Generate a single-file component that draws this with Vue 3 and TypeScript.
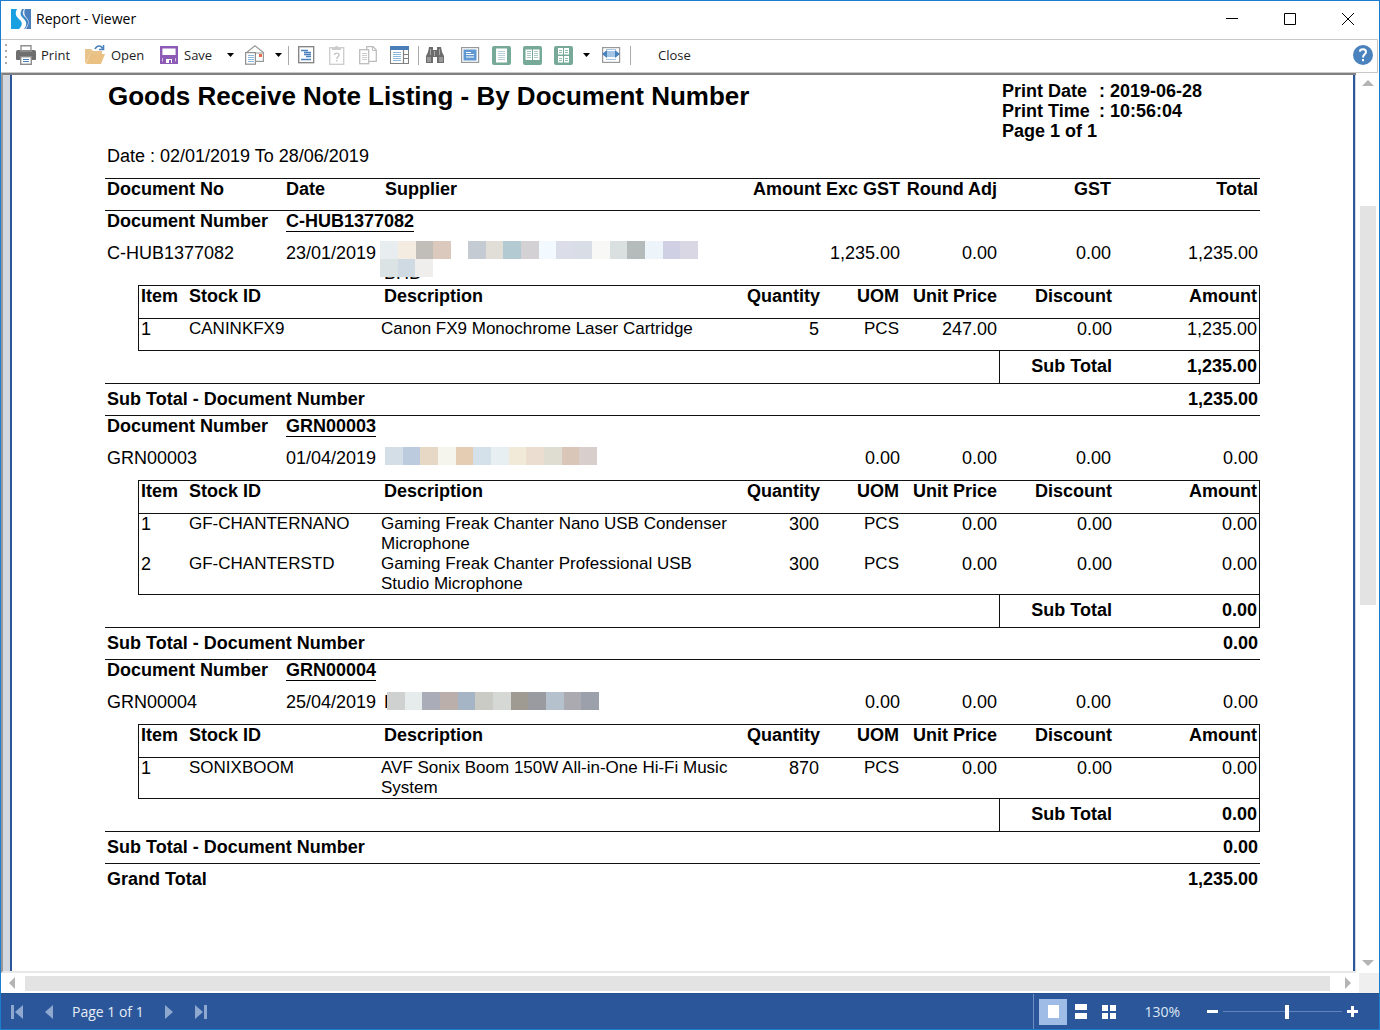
<script setup lang="ts">
import { ref } from 'vue'

interface Mosaic { x: number; y: number; w: number; colors: string[] }
interface Item { no: number; stock: string; desc: string; qty: string; uom: string; price: string; discount: string; amount: string }
interface Group {
  doc: string; date: string; supplier: string; mosaics: Mosaic[]
  amount: string; round: string; gst: string; total: string
  items: Item[]; subTotal: string
}

const groups: Group[] = [
  {
    doc: 'C-HUB1377082', date: '23/01/2019', supplier: '\nBHD',
    mosaics: [
      { x: 1, y: -2, w: 71, colors: ['#e8edf0', '#f4ece0', '#c1bdb8', '#dcc9be'] },
      { x: 89, y: -2, w: 230, colors: ['#c4cbd3', '#e1ded7', '#b4cad3', '#d3d1d4', '#f2f9ff', '#dbdde9', '#d9dde5', '#f8f8f6', '#dadfe0', '#b5baba', '#edf5fb', '#cfd0e3', '#d8d7e3'] },
      { x: 1, y: 16, w: 53, colors: ['#dbe3e5', '#cfdae2', '#efeeed'] },
    ],
    amount: '1,235.00', round: '0.00', gst: '0.00', total: '1,235.00',
    items: [
      { no: 1, stock: 'CANINKFX9', desc: 'Canon FX9 Monochrome Laser Cartridge', qty: '5', uom: 'PCS', price: '247.00', discount: '0.00', amount: '1,235.00' },
    ],
    subTotal: '1,235.00',
  },
  {
    doc: 'GRN00003', date: '01/04/2019', supplier: '',
    mosaics: [
      { x: 6, y: -1, w: 212, colors: ['#d4dee7', '#bccbdd', '#e7d8c6', '#f6f5ed', '#e5cdb4', '#d5e1ea', '#e7eff2', '#f2ead9', '#ebded1', '#dfdcd1', '#dac6b8', '#d8cfcc'] },
    ],
    amount: '0.00', round: '0.00', gst: '0.00', total: '0.00',
    items: [
      { no: 1, stock: 'GF-CHANTERNANO', desc: 'Gaming Freak Chanter Nano USB Condenser\nMicrophone', qty: '300', uom: 'PCS', price: '0.00', discount: '0.00', amount: '0.00' },
      { no: 2, stock: 'GF-CHANTERSTD', desc: 'Gaming Freak Chanter Professional USB\nStudio Microphone', qty: '300', uom: 'PCS', price: '0.00', discount: '0.00', amount: '0.00' },
    ],
    subTotal: '0.00',
  },
  {
    doc: 'GRN00004', date: '25/04/2019', supplier: 'K',
    mosaics: [
      { x: 8, y: 0, w: 212, colors: ['#cfd1d1', '#e6ecec', '#aaadb7', '#bbafab', '#a5b5c6', '#cacbc5', '#d6d8d5', '#9f9b93', '#9a9ba1', '#b5c1cc', '#aaaab0', '#9ca0ab'] },
    ],
    amount: '0.00', round: '0.00', gst: '0.00', total: '0.00',
    items: [
      { no: 1, stock: 'SONIXBOOM', desc: 'AVF Sonix Boom 150W All-in-One Hi-Fi Music\nSystem', qty: '870', uom: 'PCS', price: '0.00', discount: '0.00', amount: '0.00' },
    ],
    subTotal: '0.00',
  },
]

const zoom = ref(54)
</script>

<template>
  <div class="window">
    <header class="titlebar">
      <svg class="logo" width="20" height="20" viewBox="0 0 20 20">
        <rect width="20" height="20" fill="#18a0e0" />
        <path d="M11 0H20V20H12C18 14 15 11 12 8C9 5 10 3 11 0Z" fill="#4a80bd" />
        <path d="M6 0C3 6 6 8 9 11C12 14 11 17 8 20H13C17 15 15 12 12 9C9 6 9 4 11 0Z" fill="#fff" />
        <path d="M13 0C10 5 13 7 15 9C18 12 18 15 14 20H15C19 14 18 11 15 8C13 5 13 3 14 0Z" fill="#dcecf8" />
      </svg>
      <h1 class="caption">Report - Viewer</h1>
      <button class="winbtn" aria-label="Minimize"><svg width="12" height="12"><path d="M0 5.5H12" stroke="#000" /></svg></button>
      <button class="winbtn" aria-label="Maximize"><svg width="12" height="12"><path d="M.5 .5H11.5V11.5H.5Z" stroke="#000" fill="none" /></svg></button>
      <button class="winbtn" aria-label="Close window"><svg width="12" height="12"><path d="M0 0L12 12M12 0L0 12" stroke="#000" /></svg></button>
    </header>

    <nav class="toolbar">
      <svg class="grip" width="4" height="24"><g fill="#aaa"><rect x="1" y="1" width="2" height="2" /><rect x="1" y="7" width="2" height="2" /><rect x="1" y="13" width="2" height="2" /><rect x="1" y="19" width="2" height="2" /></g></svg>
      <button class="tool print">
        <svg width="20" height="20" viewBox="0 0 20 20">
          <path d="M5 6V.7H15V6" fill="#fff" stroke="#909090" stroke-width="1.4" />
          <path d="M2 5H18Q20 5 20 7V14Q20 15 19 15H1Q0 15 0 14V7Q0 5 2 5Z" fill="#6e6e6e" />
          <rect x="4" y="5" width="12" height="2" fill="#8c8c8c" />
          <rect x="4.7" y="11.7" width="10.6" height="7.6" fill="#fff" stroke="#8c8c8c" stroke-width="1.4" />
          <path d="M7 14.5H13M7 16.5H13" stroke="#4a82bd" />
        </svg>
        <span>Print</span>
      </button>
      <button class="tool open">
        <svg width="21" height="20" viewBox="0 0 21 20">
          <path d="M0 18V4H6L8 6H17V9H5L1 18Z" fill="#e8c48a" />
          <path d="M1 19L5 9H20L16 19Z" fill="#ebc083" />
          <path d="M10 4C12 0 16 0 17.500 3.500M18.500 0V4.500H14" fill="none" stroke="#4a82bd" stroke-width="1.600" />
        </svg>
        <span>Open</span>
      </button>
      <button class="tool save">
        <svg width="18" height="18" viewBox="0 0 18 18">
          <path d="M1.200 1.200H16.800V16.800H1.200Z" fill="#fff" stroke="#8d5ab5" stroke-width="2.400" />
          <rect x="0" y="9" width="18" height="3" fill="#8d5ab5" />
          <rect x="3" y="11" width="12" height="7" fill="#8d5ab5" />
          <path d="M6 17V13H12V17H11V14H9V17Z" fill="#fff" />
        </svg>
        <span>Save</span>
      </button>
      <button class="drop" aria-label="Save options"><svg width="7" height="4"><path d="M0 0H7L3.500 4Z" /></svg></button>
      <button class="icon" aria-label="Send e-mail">
        <svg width="20" height="20" viewBox="0 0 20 20">
          <path d="M1 8L10 .8L19 8" fill="none" stroke="#999" stroke-width="1.200" />
          <path d="M9 8H18.400V16.400H9" fill="#fff" stroke="#999" stroke-width="1.200" />
          <rect x="14" y="9" width="3" height="3" fill="#e8694a" />
          <rect x=".6" y="7.600" width="9.800" height="11.600" fill="#fff" stroke="#909090" stroke-width="1.200" />
          <path d="M3 10.500H9M3 12.500H9M3 14.500H9M3 16.500H9" stroke="#8db8de" />
        </svg>
      </button>
      <button class="drop" aria-label="E-mail options"><svg width="7" height="4"><path d="M0 0H7L3.500 4Z" /></svg></button>
      <i class="sep"></i>
      <button class="icon" aria-label="Bookmarks">
        <svg width="20" height="20" viewBox="0 0 20 20">
          <rect x="2.700" y="1.700" width="15" height="16" fill="#fff" stroke="#808080" stroke-width="1.300" />
          <path d="M5 5.500H12M8 7.500H15M8 9.500H15M10 11.500H15M5 14.500H15" stroke="#4a82bd" stroke-width="1.300" />
        </svg>
      </button>
      <button class="icon" aria-label="Parameters">
        <svg width="20" height="20" viewBox="0 0 20 20">
          <rect x="2.700" y="2.700" width="14" height="16.600" fill="#fff" stroke="#ccc" stroke-width="1.300" />
          <path d="M5 3H8C8 0 11 0 11 3H14V5H5Z" fill="#ccc" />
          <path d="M7.500 10C7.500 7.500 12 7.500 12 10C12 11.500 9.800 11.500 9.800 14M9.800 15V16.500" fill="none" stroke="#c4c4c4" stroke-width="1.400" />
        </svg>
      </button>
      <button class="icon" aria-label="Resources">
        <svg width="20" height="20" viewBox="0 0 20 20">
          <path d="M8.700 1.700H15L18.300 5V16.300H8.700Z" fill="#fff" stroke="#bdbdbd" stroke-width="1.300" />
          <path d="M14.500 2V5.500H18" fill="none" stroke="#bdbdbd" />
          <rect x="1.700" y="4.700" width="9" height="14" fill="#fff" stroke="#bdbdbd" stroke-width="1.300" />
          <path d="M4 8.500H9M4 10.500H9M4 12.500H9M4 14.500H9" stroke="#ccc" />
        </svg>
      </button>
      <button class="icon" aria-label="Thumbnails">
        <svg width="20" height="20" viewBox="0 0 20 20">
          <rect x="1.500" y="1.500" width="18" height="17" fill="#fff" stroke="#808080" />
          <rect x="1" y="1" width="19" height="4" fill="#4a7eb8" />
          <path d="M14.500 5V18M14 9.500H19M14 13.500H19" stroke="#808080" stroke-width="1.200" />
          <path d="M4 7.500H12M4 9.500H12M4 11.500H12M4 13.500H12M4 15.500H12" stroke="#8db8de" />
        </svg>
      </button>
      <i class="sep wide"></i>
      <button class="icon find" aria-label="Find">
        <svg width="20" height="20" viewBox="0 0 20 20">
          <path d="M4 2H8V5H12V2H16L17 7L19 11V18H12V12H8V18H1V11L3 7Z" fill="#6c6c6c" />
          <path d="M2 12H6V17H2ZM14 12H18V17H14Z" fill="#999" />
          <path d="M5.500 4V10M14.500 4V10M9.500 6V11" stroke="#aaa" />
        </svg>
      </button>
      <button class="icon" aria-label="Full screen">
        <svg width="20" height="20" viewBox="0 0 20 20">
          <rect x="1.600" y="2.600" width="17" height="14.800" fill="#fff" stroke="#999" stroke-width="1.200" />
          <rect x="3.500" y="4.500" width="13" height="11" fill="#5f98d3" />
          <path d="M6 7.500H11M6 9.500H14M6 12H14" stroke="#fff" stroke-width="1.200" />
        </svg>
      </button>
      <button class="icon" aria-label="One page">
        <svg width="20" height="20" viewBox="0 0 20 20">
          <rect x="1" y="1" width="19" height="19" rx="2" fill="#76a998" /><rect x="5" y="3.500" width="11" height="14" fill="#fff" />
          <path d="M7 6.500H14M7 8.500H14M7 10.500H14M7 12.500H14M7 14.500H14" stroke="#bcd0dc" />
        </svg>
      </button>
      <button class="icon" aria-label="Two pages">
        <svg width="20" height="20" viewBox="0 0 20 20">
          <rect x="1" y="1" width="19" height="19" rx="2" fill="#76a998" /><path d="M3.500 4.500H10V15H3.500ZM11 4.500H17.500V15H11Z" fill="#fff" />
          <path d="M5 6.500H9M5 8.500H9M5 10.500H9M5 12.500H9M12 6.500H16M12 8.500H16M12 10.500H16M12 12.500H16" stroke="#a9c8c4" />
        </svg>
      </button>
      <button class="icon" aria-label="Multiple pages">
        <svg width="20" height="20" viewBox="0 0 20 20">
          <rect x="1" y="1" width="19" height="19" rx="2" fill="#76a998" /><path d="M5 3H10V9.500H5ZM11 3H16V9.500H11ZM5 11H10V17.500H5ZM11 11H16V17.500H11Z" fill="#fff" />
          <path d="M6 5.500H9M6 7.500H9M12 5.500H15M12 7.500H15M6 13.500H9M6 15.500H9M12 13.500H15M12 15.500H15" stroke="#8fbcae" />
        </svg>
      </button>
      <button class="drop" aria-label="Page layout"><svg width="7" height="4"><path d="M0 0H7L3.500 4Z" /></svg></button>
      <button class="icon" aria-label="Page width">
        <svg width="20" height="20" viewBox="0 0 20 20">
          <rect x="1.600" y="2.600" width="17" height="14.800" fill="#fff" stroke="#999" stroke-width="1.200" />
          <path d="M5 4.500H15M5 14.500H15" stroke="#a9c8e4" />
          <path d="M1 9L6 5V7H14V5L19 9L14 13V11H6V13Z" fill="#4a82bd" /><rect x="6" y="6" width="8" height="6" fill="#a3c6e6" />
        </svg>
      </button>
      <i class="sep wide"></i>
      <button class="tool close">Close</button>
      <button class="help" aria-label="Help">
        <svg width="20" height="20" viewBox="0 0 20 20"><circle cx="10" cy="10" r="10" fill="#4a82bd" /><path d="M6.800 6.700C7.200 3.300 13 3.500 13 7C13 9.500 10 9.300 10 12.500M10 14V16.200" fill="none" stroke="#fff" stroke-width="2" /></svg>
      </button>
    </nav>

    <main class="viewer">
      <div class="canvas">
        <article class="paper">
          <div class="head">
            <h2>Goods Receive Note Listing - By Document Number</h2>
            <dl class="meta">
              <div><dt>Print Date</dt><dd>: 2019-06-28</dd></div>
              <div><dt>Print Time</dt><dd>: 10:56:04</dd></div>
              <div><dt>Page 1 of 1</dt></div>
            </dl>
          </div>
          <p class="range">Date : 02/01/2019 To 28/06/2019</p>

          <table class="listing">
            <colgroup><col class="c-doc" /><col class="c-date" /><col /><col class="c-exc" /><col class="c-round" /><col class="c-gst" /><col class="c-total" /></colgroup>
            <thead>
              <tr class="ruled short">
                <th>Document No</th><th>Date</th><th class="supplier">Supplier</th>
                <th class="num">Amount Exc GST</th><th class="num">Round Adj</th><th class="num">GST</th><th class="num">Total</th>
              </tr>
            </thead>
            <tbody v-for="g in groups" :key="g.doc">
              <tr class="ruled tall"><th>Document Number</th><th colspan="6"><u>{{ g.doc }}</u></th></tr>
              <tr class="short">
                <td>{{ g.doc }}</td>
                <td>{{ g.date }}</td>
                <td class="supplier">
                  <div class="name">{{ g.supplier }}</div>
                  <div v-for="(m, i) in g.mosaics" :key="i" class="mosaic" :style="{ left: m.x + 'px', top: m.y + 'px', width: m.w + 'px' }">
                    <i v-for="(c, j) in m.colors" :key="j" :style="{ background: c }"></i>
                  </div>
                </td>
                <td class="num">{{ g.amount }}</td><td class="num">{{ g.round }}</td><td class="num">{{ g.gst }}</td><td class="num">{{ g.total }}</td>
              </tr>
              <tr>
                <td colspan="7" class="nest">
                  <table class="items">
                    <colgroup><col class="i-no" /><col class="i-stock" /><col /><col class="i-qty" /><col class="i-uom" /><col class="i-price" /><col class="i-disc" /><col class="i-amt" /></colgroup>
                    <thead>
                      <tr class="ruled tall">
                        <th>Item</th><th>Stock ID</th><th class="desc">Description</th><th class="num">Quantity</th>
                        <th class="num">UOM</th><th class="num">Unit Price</th><th class="num">Discount</th><th class="num">Amount</th>
                      </tr>
                    </thead>
                    <tbody>
                      <tr v-for="it in g.items" :key="it.no" class="item">
                        <td>{{ it.no }}</td><td class="text">{{ it.stock }}</td><td class="text">{{ it.desc }}</td><td class="num">{{ it.qty }}</td>
                        <td class="num text">{{ it.uom }}</td><td class="num">{{ it.price }}</td><td class="num">{{ it.discount }}</td><td class="num">{{ it.amount }}</td>
                      </tr>
                    </tbody>
                    <tfoot>
                      <tr class="ruled tall sub"><td colspan="6"></td><th class="num box">Sub Total</th><th class="num">{{ g.subTotal }}</th></tr>
                    </tfoot>
                  </table>
                </td>
              </tr>
              <tr class="ruled short sum"><th colspan="6">Sub Total - Document Number</th><th class="num">{{ g.subTotal }}</th></tr>
            </tbody>
            <tfoot>
              <tr class="ruled short sum"><th colspan="6">Grand Total</th><th class="num">1,235.00</th></tr>
            </tfoot>
          </table>
        </article>
      </div>
      <div class="vscroll">
        <svg width="12" height="6"><path d="M0 6L6 0L12 6Z" fill="#b4b4b4" /></svg>
        <div class="vtrack"><div class="vthumb"></div></div>
        <svg width="12" height="6"><path d="M0 0L6 6L12 0Z" fill="#b4b4b4" /></svg>
      </div>
    </main>

    <div class="hscroll">
      <svg width="6" height="12"><path d="M6 0L0 6L6 12Z" fill="#b4b4b4" /></svg>
      <div class="hthumb"></div>
      <svg width="6" height="12"><path d="M0 0L6 6L0 12Z" fill="#b4b4b4" /></svg>
      <div class="corner"></div>
    </div>

    <footer class="status">
      <button class="nav" aria-label="First page"><svg width="12" height="14"><path d="M0 0H3V14H0ZM12 0V14L4 7Z" /></svg></button>
      <button class="nav" aria-label="Previous page"><svg width="8" height="14"><path d="M8 0V14L0 7Z" /></svg></button>
      <span class="pages">Page 1 of 1</span>
      <button class="nav" aria-label="Next page"><svg width="8" height="14"><path d="M0 0V14L8 7Z" /></svg></button>
      <button class="nav" aria-label="Last page"><svg width="12" height="14"><path d="M9 0H12V14H9ZM0 0V14L8 7Z" /></svg></button>
      <div class="right">
        <button class="view active" aria-label="Single page"><svg width="11" height="13"><rect width="11" height="13" /></svg></button>
        <button class="view" aria-label="Continuous"><svg width="12" height="15"><path d="M0 0H12V6H0ZM0 9H12V15H0Z" /></svg></button>
        <button class="view" aria-label="Multiple pages"><svg width="14" height="14"><path d="M0 0H6V6H0ZM8 0H14V6H8ZM0 8H6V14H0ZM8 8H14V14H8Z" /></svg></button>
        <span class="percent">130%</span>
        <button class="step" aria-label="Zoom out"><svg width="11" height="11"><path d="M0 4H11V7H0Z" /></svg></button>
        <input v-model="zoom" type="range" min="0" max="100" aria-label="Zoom" />
        <button class="step" aria-label="Zoom in"><svg width="11" height="11"><path d="M0 4H4V0H7V4H11V7H7V11H4V7H0Z" /></svg></button>
      </div>
    </footer>
  </div>
</template>

<style>
body { margin: 0; }
</style>

<style scoped>
* { box-sizing: border-box; }
.window { min-height: 100vh; display: flex; flex-direction: column; border: 1px solid #1a7dd0; background: #fff; color: #000; font: 14px/20px "Open Sans", "Noto Sans", sans-serif; }
button { border: 0; padding: 0; margin: 0; background: none; font: inherit; color: inherit; display: flex; align-items: center; justify-content: center; }
svg { display: block; flex: none; }

.titlebar { display: flex; align-items: center; height: 38px; padding: 0 2px 2px 10px; }
.caption { margin: 0 auto 0 5px; font-size: 14px; font-weight: 400; }
.winbtn { width: 58px; height: 36px; }

.toolbar { display: flex; align-items: center; height: 34px; margin-right: 1px; padding-bottom: 2px; border: 1px solid #c8c8c8; border-left: 0; font-size: 13px; color: #1e1e1e; }
.grip { margin: 0 8px 0 3px; }
.tool { justify-content: flex-start; gap: 5px; height: 28px; }
.print { width: 69px; }
.open { width: 75px; }
.save { width: 62px; gap: 6px; }
.drop { width: 17px; height: 28px; }
.icon { width: 31px; height: 28px; }
.find { width: 34px; justify-content: flex-start; padding-left: 5px; }
.sep { width: 1px; height: 19px; margin: 0 1px; background: #aaa; }
.sep.wide { margin-left: 4px; }
.close { margin-left: 26px; }
.help { margin: 0 4px 0 auto; }

.viewer { flex: 1; display: flex; }
.canvas { flex: 1; display: flex; padding: 0 1px 0 7px; background: #d3d8e0; border-top: 2px solid #808080; border-left: 2px solid #999; border-bottom: 2px solid #e8e8e8; }
.paper { flex: 1; padding: 6px 93px 40px; background: #fff; border: 2px solid #2b579a; border-width: 0 2px; font: 18px/20px "Liberation Sans", Arial, sans-serif; }
.head { display: flex; justify-content: space-between; }
h2 { margin: 0; padding: 0 0 0 3px; font-size: 26px; line-height: 30px; white-space: nowrap; }
.meta { width: 258px; margin: 0; font-weight: 700; }
.meta div { display: flex; }
.meta dt { width: 97px; white-space: nowrap; }
.meta dd { margin: 0; }
.range { margin: 5px 0 12px 2px; }

table { width: 100%; table-layout: fixed; border-collapse: separate; border-spacing: 0; }
th, td { padding: 0 2px; text-align: left; vertical-align: top; font-weight: 400; white-space: nowrap; }
th { font-weight: 700; }
th.num, td.num { text-align: right; }
.ruled > * { border-top: 1px solid #111; }
.short > * { height: 32px; }
.tall > * { height: 33px; }
.c-doc { width: 179px; } .c-date { width: 95px; } .c-exc { width: 158px; } .c-round { width: 97px; } .c-gst { width: 114px; } .c-total { width: 147px; }
u { text-decoration: none; display: inline-block; line-height: 19px; border-bottom: 1px solid #000; }
th.supplier { padding-left: 6px; }
td.supplier { position: relative; }
.name { padding-left: 3px; min-height: 20px; padding-bottom: 2px; white-space: pre; }
.mosaic { position: absolute; display: flex; height: 18px; }
.mosaic i { flex: 1; }
.nest { padding: 0 0 0 33px; }
.items thead th:first-child, .items tbody td:first-child { border-left: 1px solid #111; }
.items th:last-child, .items td:last-child { border-right: 1px solid #111; }
.i-no { width: 49px; } .i-stock { width: 192px; } .i-qty { width: 76px; } .i-uom { width: 80px; } .i-price { width: 98px; } .i-disc { width: 115px; } .i-amt { width: 146px; }
th.desc { padding-left: 5px; }
.text { font-size: 17px; white-space: pre; }
.item > * { height: 32px; }
.item:first-child > * { border-top: 1px solid #111; }
.sub > *, .sum > * { padding-top: 5px; }
.box { border-left: 1px solid #111; }

.vscroll { display: flex; flex-direction: column; align-items: center; width: 23px; padding: 7px 0 7px; }
.vtrack { flex: 1; display: flex; flex-direction: column; padding: 120px 0 355px; }
.vthumb { flex: 1; width: 16px; background: #e3e3e3; }
.hscroll { display: flex; align-items: center; height: 20px; padding-left: 8px; }
.hthumb { flex: 1; height: 15px; margin: 0 15px 0 10px; background: #e3e3e3; }
.corner { width: 20px; height: 20px; margin-left: 8px; background: #efefef; }

.status { display: flex; align-items: center; height: 36px; background: #2b579a; color: #fff; border-top: 1px solid #24508f; }
.nav { width: 32px; height: 32px; fill: #8fa8d0; }
.pages { margin: 0 9px 0 7px; color: #e6ecf6; }
.right { display: flex; align-items: center; align-self: stretch; margin-left: auto; padding: 0 21px 0 5px; border-left: 1px solid #6f8fc2; fill: #fff; }
.view { width: 28px; height: 26px; }
.active { background: #9fbce6; }
.percent { margin: 0 27px 0 21px; color: #dfe7f4; }
.step { width: 11px; height: 26px; }
input[type="range"] { appearance: none; width: 119px; height: 16px; margin: 0 5px; background: linear-gradient(#5f83ba, #5f83ba) center / 100% 1px no-repeat; }
input[type="range"]::-webkit-slider-thumb { appearance: none; width: 4px; height: 14px; background: #fff; }
</style>
